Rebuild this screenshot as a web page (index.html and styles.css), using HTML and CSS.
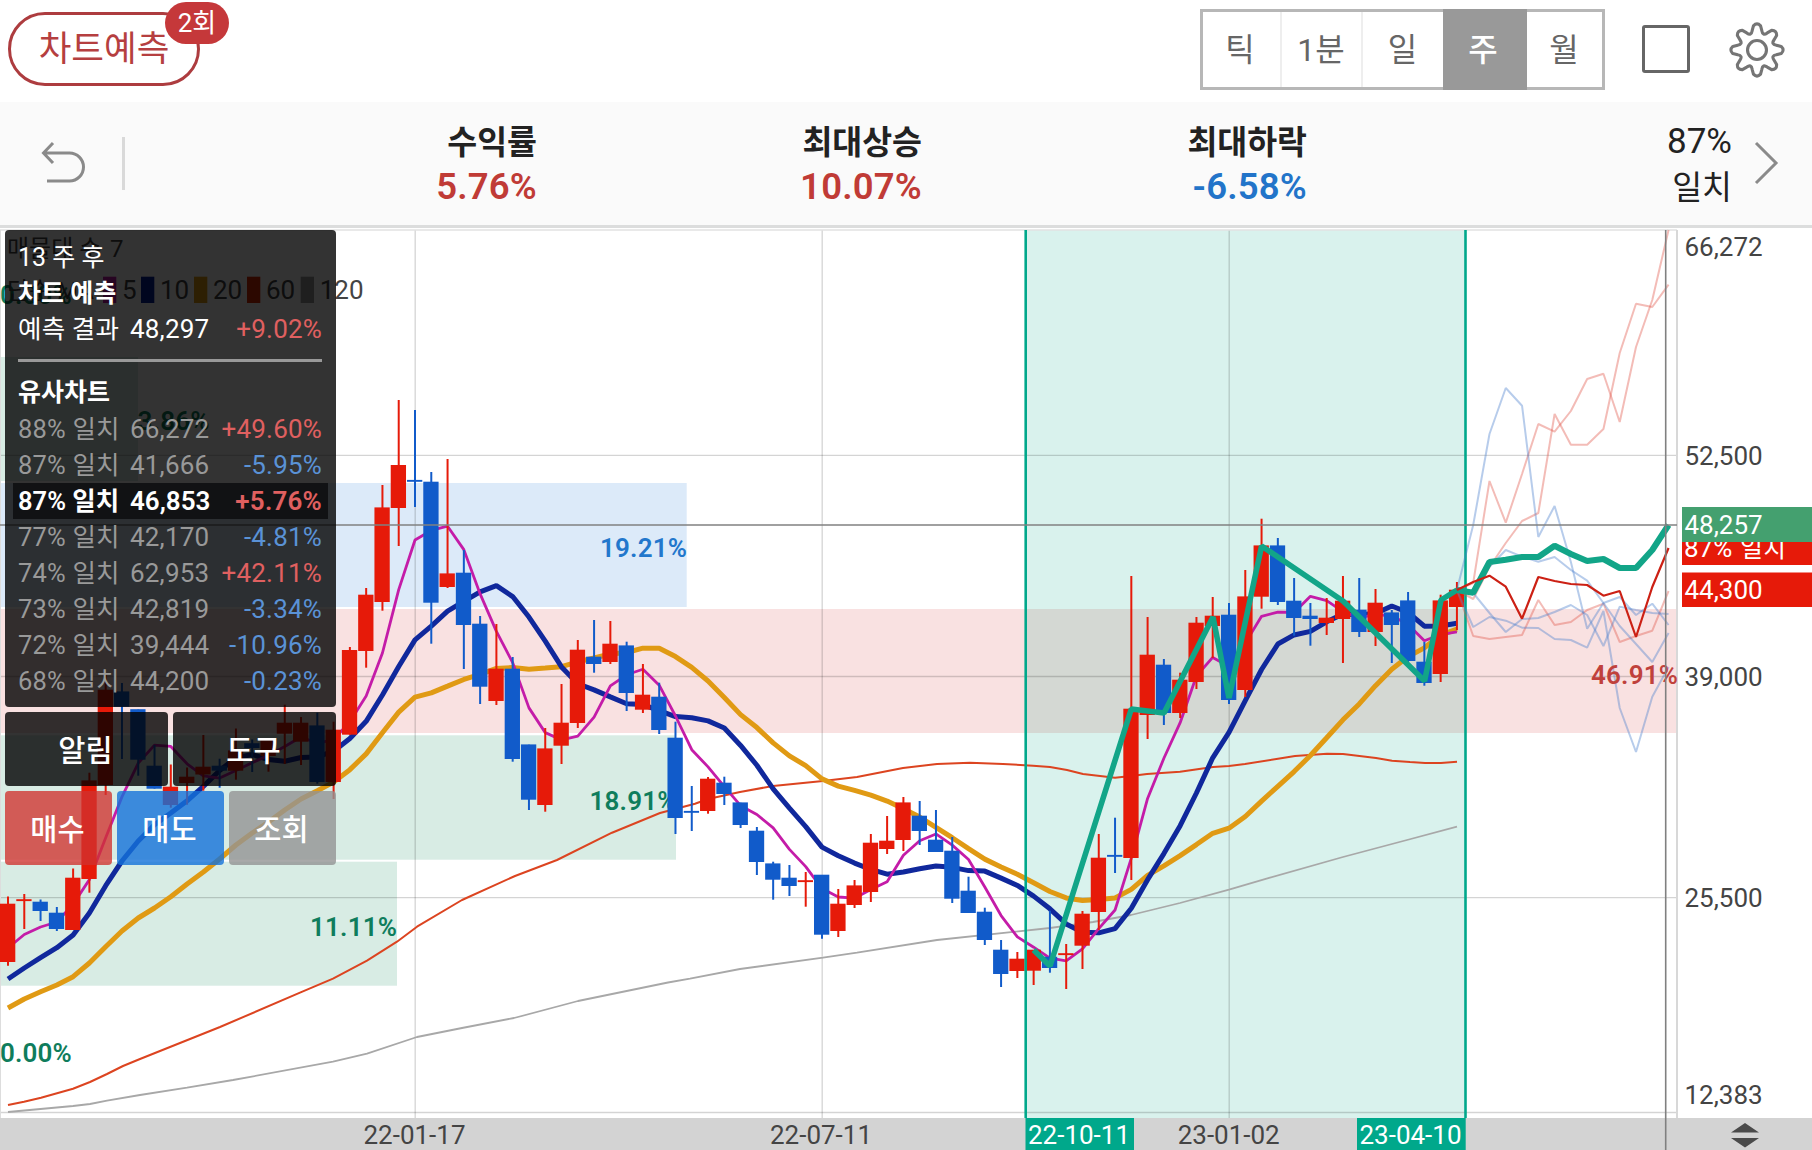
FILE: index.html
```html
<!DOCTYPE html>
<html lang="ko">
<head>
  <meta charset="UTF-8">
  <meta name="viewport" content="width=device-width, initial-scale=1.0">
  <title>차트예측</title>
  <link rel="stylesheet" href="styles.css">
</head>
<body>

<!-- 상단 메뉴 -->
<header class="topbar">
  <button class="predict-btn">차트예측<span class="badge">2회</span></button>
  <div class="tools">
    <div class="period">
      <button>틱</button>
      <button>1분</button>
      <button>일</button>
      <button class="active">주</button>
      <button>월</button>
    </div>
    <div class="square"></div>
    <svg class="gear" width="58" height="58" viewBox="-30 -30 60 60">
      <path d="M-5-20L-3.7-25Q0-29 3.7-25L5-20Q5.9-14.3 10.6-17.7L15.1-20.3Q20.5-20.5 20.3-15.1L17.7-10.6Q14.3-5.9 20-5L25-3.7Q29 0 25 3.7L20 5Q14.3 5.9 17.7 10.6L20.3 15.1Q20.5 20.5 15.1 20.3L10.6 17.7Q5.9 14.3 5 20L3.7 25Q0 29-3.7 25L-5 20Q-5.9 14.3-10.6 17.7L-15.1 20.3Q-20.5 20.5-20.3 15.1L-17.7 10.6Q-14.3 5.9-20 5L-25 3.7Q-29 0-25-3.7L-20-5Q-14.3-5.9-17.7-10.6L-20.3-15.1Q-20.5-20.5-15.1-20.3L-10.6-17.7Q-5.9-14.3-5-20Z"/>
      <circle r="9.8"/>
    </svg>
  </div>
</header>

<!-- 요약 -->
<section class="summary">
  <svg class="undo" width="46" height="46" viewBox="0 0 46 46">
    <path d="M13 4L3.5 14L13 24M4 14H29.5A14 14 0 0 1 29.5 42H7"/>
  </svg>
  <div class="divider"></div>
  <div class="stat"><b>수익률</b><strong class="up">5.76%</strong></div>
  <div class="stat"><b>최대상승</b><strong class="up">10.07%</strong></div>
  <div class="stat"><b>최대하락</b><strong class="down">-6.58%</strong></div>
  <div class="match"><span>87%</span><span class="label">일치</span></div>
  <svg class="next" width="26" height="46" viewBox="0 0 26 46">
    <path d="M2 3L22 23L2 43"/>
  </svg>
</section>

<!-- 차트 -->
<main class="chart-area">
  <svg id="chart" width="1812" height="922" viewBox="0 228 1812 922"></svg>

  <div class="overlay">
    <div class="panel">
      <p>13 주 후</p>
      <p class="bold">차트 예측</p>
      <div class="row result"><span>예측 결과</span><span>48,297</span><span class="plus">+9.02%</span></div>
      <hr>
      <p class="bold">유사차트</p>
      <div class="row"><span>88% 일치</span><span>66,272</span><span class="plus">+49.60%</span></div>
      <div class="row"><span>87% 일치</span><span>41,666</span><span class="minus">-5.95%</span></div>
      <div class="row selected"><span>87% 일치</span><span>46,853</span><span class="plus">+5.76%</span></div>
      <div class="row"><span>77% 일치</span><span>42,170</span><span class="minus">-4.81%</span></div>
      <div class="row"><span>74% 일치</span><span>62,953</span><span class="plus">+42.11%</span></div>
      <div class="row"><span>73% 일치</span><span>42,819</span><span class="minus">-3.34%</span></div>
      <div class="row"><span>72% 일치</span><span>39,444</span><span class="minus">-10.96%</span></div>
      <div class="row"><span>68% 일치</span><span>44,200</span><span class="minus">-0.23%</span></div>
    </div>
    <div class="actions">
      <button class="dark">알림</button>
      <button class="dark">도구</button>
    </div>
    <div class="actions">
      <button class="buy">매수</button>
      <button class="sell">매도</button>
      <button class="view">조회</button>
    </div>
  </div>
</main>

<script src="chart.js"></script>
</body>
</html>
```
FILE: styles.css
```css
/* 기본 */
* {
  margin: 0;
  padding: 0;
  box-sizing: border-box;
}

body {
  width: 1812px;
  height: 1150px;
  overflow: hidden;
  background: #fff;
  font-family: Roboto, "Noto Sans CJK KR", sans-serif;
  color: #222;
}

button {
  font-family: inherit;
  border: none;
  background: none;
}

/* 상단 메뉴 */
.topbar {
  display: flex;
  justify-content: space-between;
  height: 102px;
  padding: 9px 26px 0 8px;
}

.predict-btn {
  position: relative;
  width: 192px;
  height: 74px;
  margin-top: 3px;
  border: 3px solid #ad3c3f;
  border-radius: 37px;
  color: #b53f40;
  font-size: 35.5px;
  line-height: 66px;
  padding-bottom: 0;
}

.badge {
  position: absolute;
  top: -13px;
  right: -32px;
  width: 64px;
  height: 42px;
  border-radius: 21px;
  background: #c5383a;
  color: #fff;
  font-size: 26px;
  line-height: 43px;
}

.tools {
  display: flex;
  align-items: flex-start;
}

.period {
  display: flex;
  width: 405px;
  height: 81px;
  border: 3px solid #b7b7b7;
}

.period button {
  width: 81px;
  border-right: 2px solid #eee;
  color: #666;
  font-size: 32px;
  padding-right: 1px;
  padding-bottom: 5px;
}

.period button:first-child {
  width: 79px;
  padding-right: 3px;
}

.period button:nth-child(3) {
  width: 80px;
  border-right: none;
}

.period button:last-child {
  width: 75px;
  border-right: none;
}

.period .active {
  width: 84px;
  height: 81px;
  margin-top: -3px;
  padding-right: 4px;
  border: none;
  background: #999;
  color: #fff;
  font-weight: 500;
}

.square {
  width: 48px;
  height: 48px;
  margin: 16px 38px 0 37px;
  border: 3px solid #666;
  border-radius: 3px;
}

.gear {
  margin-top: 11.5px;
  fill: none;
  stroke: #757575;
  stroke-width: 3.2;
  stroke-linejoin: round;
}

/* 요약 */
.summary {
  display: flex;
  align-items: flex-start;
  height: 126px;
  background: #fafafa;
  border-bottom: 3px solid #dcdddd;
  padding-left: 40px;
}

.undo,
.next {
  fill: none;
  stroke: #8a8a8a;
  stroke-width: 3;
  margin-top: 37px;
}

.next {
  margin-top: 38px;
}

.divider {
  width: 3px;
  height: 53px;
  margin: 35px 28px 0 36px;
  background: #d9d9d9;
}

.stat {
  display: flex;
  flex-direction: column;
  align-items: flex-end;
  width: 385px;
  padding-top: 19px;
}

.stat b {
  font-size: 32.5px;
  line-height: 44px;
}

.stat strong {
  font-size: 36.5px;
  line-height: 44px;
  font-weight: 600;
  letter-spacing: 0.2px;
}

.divider + .stat {
  width: 384px;
}

.up {
  color: #c03b36;
}

.down {
  color: #2274c9;
}

.match {
  display: flex;
  flex-direction: column;
  align-items: flex-end;
  width: 425px;
  padding-top: 16px;
  margin-right: 22px;
  font-size: 35px;
  line-height: 47px;
}

.match .label {
  font-size: 32.5px;
}

/* 차트 */
.chart-area {
  position: relative;
  height: 922px;
}

#chart {
  display: block;
}

#chart text {
  font-size: 26px;
  fill: #444;
}

#chart .pct {
  font-size: 26px;
  font-weight: 600;
  letter-spacing: 0.15px;
}

#chart .small {
  font-size: 24px;
}

#chart .tag {
  fill: #fff;
}

.overlay {
  position: absolute;
  left: 5px;
  top: 2px;
  width: 331px;
  display: flex;
  flex-direction: column;
  gap: 5px;
}

.panel {
  height: 477px;
  padding: 10px 8px 0;
  border-radius: 4px;
  background: rgba(0, 0, 0, 0.8);
  color: #fff;
  font-size: 26px;
}

.panel p,
.row {
  height: 36px;
  line-height: 36px;
  padding: 0 6px 0 5px;
  white-space: nowrap;
}

.panel p {
  font-size: 25px;
}

.panel .bold {
  font-weight: 700;
}

.panel hr {
  height: 3px;
  border: none;
  background: #999;
  margin: 12px 6px 13px 5px;
}

.row {
  display: grid;
  grid-template-columns: 112px 81px 1fr;
  color: #999;
  letter-spacing: 0.2px;
}

.row span:last-child {
  text-align: right;
}

.row span:first-child {
  font-size: 25.5px;
}

.row.result {
  height: 35px;
  line-height: 35px;
  color: #fff;
}

.row.selected {
  background: rgba(0, 0, 0, 0.6);
  color: #fff;
  font-weight: 600;
  letter-spacing: 0;
}

.plus {
  color: #e06060;
}

.panel .selected .plus {
  letter-spacing: 0.2px;
}

.minus {
  color: #5a92d6;
}

.actions {
  display: flex;
  gap: 5px;
}

.actions button {
  flex: 1;
  height: 74px;
  padding: 0 2px 3px 0;
  border-radius: 4px;
  color: #fff;
  font-size: 29.5px;
  font-weight: 500;
}

.dark {
  background: rgba(0, 0, 0, 0.8);
}

.buy {
  background: rgba(207, 50, 46, 0.78);
}

.sell {
  background: rgba(20, 114, 218, 0.8);
}

.view {
  background: rgba(148, 148, 148, 0.8);
}
```
FILE: chart.js
```js
const chart = document.getElementById('chart');
const RED = '#e61a09';
const BLUE = '#115bca';
const GREEN = '#00a88b';

const STEP = 16.28; // 봉 간격
const xOf = i => 8 + i * STEP;

// [색, 몸통 위, 몸통 아래, 고가, 저가]
const candles = [
  ['r', 904, 962, 896.5, 965.7], ['r', 899.5, 900.5, 894, 929], ['b', 902, 911, 899.5, 921], ['b', 913, 929, 907, 931],
  ['r', 878, 930, 868.5, 930], ['r', 780.7, 879, 772.7, 892.7], ['r', 690, 785, 674, 795], ['b', 691.7, 706.7, 683, 759],
  ['b', 709.5, 759.7, 709.5, 775.7], ['b', 766, 788.7, 745, 788.7], ['r', 787, 805, 764.5, 807.7], ['r', 777, 783, 767.5, 804.7],
  ['r', 767, 774.5, 735, 790.7], ['b', 766, 770.7, 758.7, 787.7], ['r', 750.7, 770.7, 728.5, 779.7], ['b', 743.5, 748, 739.5, 772],
  ['r', 740.5, 756, 740.5, 771.7], ['r', 723, 733.7, 704.7, 764], ['r', 723, 741.7, 717, 765], ['b', 725.7, 782, 712.7, 783.7],
  ['r', 730, 782, 721.7, 799], ['r', 650.3, 734.7, 647, 734.7], ['r', 595, 651, 588, 667.7], ['r', 507.7, 602, 485, 610.7],
  ['r', 465.3, 508, 400, 546], ['b', 480.2, 481.5, 410, 507], ['b', 482, 602.7, 472, 643.7], ['r', 573.7, 587, 459, 588],
  ['b', 573, 625, 550, 669], ['b', 624, 686.7, 616, 704], ['r', 669, 701, 624, 705], ['b', 669, 759, 657, 761.7],
  ['b', 744.7, 799.7, 744.7, 810], ['r', 748.7, 805, 728, 811.7], ['r', 723, 745.7, 684, 764], ['r', 650, 723, 640, 728],
  ['b', 657, 664, 620, 672.7], ['r', 644, 662, 621, 664], ['b', 645.7, 693, 641.7, 711], ['r', 695, 709.7, 664, 713],
  ['b', 697, 730, 682.7, 734], ['b', 738, 818, 721.7, 834], ['b', 811.2, 812.5, 786, 831], ['r', 779, 811, 777, 813.7],
  ['b', 783, 794, 776.7, 805], ['b', 802.7, 825, 802.7, 828], ['b', 831, 862, 827, 875], ['b', 863.7, 879.7, 861.7, 899.7],
  ['b', 878, 886, 865, 896], ['r', 880.5, 881.5, 872, 906.7], ['b', 875, 934.7, 875, 938.7], ['r', 904, 931, 889, 937],
  ['r', 885.7, 905, 880, 908], ['r', 843, 892, 834, 902], ['r', 841, 849, 816, 854], ['r', 802.7, 840, 797, 851],
  ['b', 816, 831, 801, 845], ['b', 840, 852, 810, 852], ['b', 851, 898.7, 837, 903], ['b', 891, 913, 876.7, 913],
  ['b', 912, 940, 907.7, 945], ['b', 950, 974, 940, 987], ['r', 959, 971, 952, 978], ['r', 950, 970.7, 950, 985],
  ['b', 957, 968, 910.7, 972.7], ['r', 953.5, 954.5, 944, 989], ['r', 914, 945.7, 911, 969], ['r', 858, 912, 834, 930],
  ['b', 855.2, 856.4, 817.7, 873], ['r', 709, 858, 576, 880], ['r', 655, 715, 617, 739], ['b', 665, 713, 659, 725],
  ['r', 680, 713, 672.7, 718], ['r', 623, 682, 617, 689], ['r', 616, 626, 597, 658], ['b', 615, 700, 603, 704],
  ['r', 596.7, 690, 570, 697], ['r', 545.7, 596.7, 518.7, 608.7], ['b', 545.7, 602, 538, 605], ['b', 601, 618, 578, 635.7],
  ['b', 616, 619, 603, 645.7], ['r', 618, 623, 598, 635], ['r', 601, 619, 576, 663], ['b', 610, 632, 578, 637],
  ['r', 603, 632, 589, 646], ['b', 612.7, 625, 610, 663], ['b', 600.7, 661, 592, 662], ['b', 662, 683, 642, 685.7],
  ['r', 600.7, 674, 594.7, 682], ['r', 590, 607, 582, 630]
];

// 이동평균 앞부분은 이전 데이터로 계산된 값
const maHead = {
  5: [948, 934.5, 927, 922],
  10: [979, 968, 957.7, 947.7, 935, 913, 885.7, 861, 841],
  20: [1008, 999, 991.7, 985, 976.7, 963, 946.7, 931, 918, 908, 896.7, 884, 872, 859, 845, 833, 822, 810, 799]
};

const ma60 = [8,1105, 24,1101.7, 41,1097.7, 73,1088.7, 90,1082, 107,1074, 123,1066, 140,1059, 220,1027, 300,992.7,
  333,978.7, 367,960.7, 397,941.7, 417,926.7, 462,900, 515,876, 557,860, 612,832.7, 660,813, 695,803.7, 708,799, 740,792,
  773,786, 823,781, 857,777, 903,768, 937,764, 970,762.7, 1003,764, 1033,765.7, 1050,767, 1067,770, 1083,774, 1115,777.7,
  1131,776, 1147,774, 1180,771.7, 1213,767, 1229,766, 1245,764, 1278,758.7, 1295,756, 1327,753.7, 1343,754, 1376,758,
  1392,760.7, 1410,762, 1425,763, 1441,763, 1457,761.7];

const ma120 = [8,1112, 73,1106, 90,1104, 107,1100.7, 140,1095, 187,1087.7, 233,1080, 333,1061.7, 367,1053.7, 417,1037,
  462,1028, 514,1018, 578,1001, 668,982.5, 690,978.7, 740,969, 823,957.7, 857,952.7, 937,940, 1050,928, 1067,925.7,
  1093,922, 1131,915, 1180,903, 1229,889.7, 1270,877.7, 1343,857, 1407,840, 1457,826.7];

const zigzag = [1033.6,950, 1050,966, 1131.3,709, 1164,713, 1213,617, 1229,698, 1261.6,546, 1343,601, 1424.6,681, 1441,600, 1457,590];

// 예측 구간 (마지막 봉 이후 13주)
const similar = [
  ['r', [590, 583, 481, 522.7, 474, 424, 431.7, 411, 379, 373.7, 422, 347, 300, 230]],
  ['r', [590, 599, 567, 543, 521, 513, 414, 444.7, 444.7, 429, 353, 303.7, 307, 284.7]],
  ['r', [590, 636, 639, 637, 635, 600, 625, 622, 610, 603.7, 642, 636, 630.7, 591]],
  ['b', [590, 525, 434, 388, 405.7, 537, 506, 562, 628.7, 603, 597, 615, 603.7, 625]],
  ['b', [590, 592, 566.7, 550, 556.7, 561.7, 557, 570, 580.7, 603, 626, 644, 662, 633]],
  ['b', [590, 627, 617, 620.7, 627.7, 628, 639, 640, 647.7, 611, 708, 752, 696.7, 667]],
  ['b', [590, 593, 613, 632, 619, 618, 612, 605, 615, 646, 606.7, 610, 613, 614]]
];
const selected = [590, 582, 575.7, 586.7, 618.7, 577, 581, 584, 585, 595.7, 591, 637, 587, 548];
const forecast = [590, 592.7, 562, 559.7, 557, 557, 545.7, 554, 561, 559, 568, 568, 550, 525];

let out = '';

function rect(x, y, w, h, fill) {
  out += `<rect x="${x}" y="${y}" width="${w}" height="${h}" fill="${fill}"/>`;
}

function line(x1, y1, x2, y2, color, w) {
  out += `<path d="M${x1} ${y1}L${x2} ${y2}" stroke="${color}" stroke-width="${w}"/>`;
}

function poly(points, color, w, opacity = 1) {
  out += `<polyline points="${points.join(' ')}" fill="none" stroke="${color}" stroke-width="${w}" stroke-linejoin="bevel" opacity="${opacity}"/>`;
}

function text(x, y, str, cls = '', anchor = 'start', fill = '') {
  out += `<text x="${x}" y="${y}" class="${cls}" text-anchor="${anchor}"${fill ? ` style="fill:${fill}"` : ''}>${str}</text>`;
}

function average(n) {
  const closes = candles.map(c => c[0] === 'r' ? c[1] : c[2]);
  return candles.flatMap((c, i) => {
    const y = i < n - 1 ? maHead[n][i] : closes.slice(i - n + 1, i + 1).reduce((a, b) => a + b) / n;
    return [xOf(i), y];
  });
}

const future = ys => ys.flatMap((y, i) => [xOf(89 + i), y]);

// 매물대
rect(0, 357, 138, 124, '#d8ece4');
rect(0, 483, 686.7, 124, '#dceaf9');
rect(0, 609, 1677, 124, '#f9e1e1');
rect(0, 735.3, 676, 124.4, '#d8ece4');
rect(0, 861.7, 397, 124, '#d8ece4');

// 선택 구간
rect(1025.5, 230, 440.5, 888, 'rgba(0,166,135,0.15)');

// 격자
[455.3, 676.5, 897.7, 1112.5].forEach(y => line(0, y, 1677, y, 'rgba(0,0,0,0.17)', 1.3));
[415.2, 822.2, 1229.2].forEach(x => line(x, 230, x, 1118, 'rgba(0,0,0,0.15)', 1.5));
line(0, 230, 1677, 230, '#e2e2e2', 1.5);
line(0.5, 230, 0.5, 1118, '#ddd', 1);
line(1677, 230, 1677, 1118, '#d8d8d8', 2);

// 매물대 비율, 범례
text(0, 304, '0.00%', 'pct', 'start', '#0f7d5c');
text(209.5, 430, '3.86%', 'pct', 'end', '#0f7d5c');
text(687, 556.7, '19.21%', 'pct', 'end', '#2277cc');
text(676.5, 809.5, '18.91%', 'pct', 'end', '#0f7d5c');
text(397, 936, '11.11%', 'pct', 'end', '#0f7d5c');
text(0, 1061.5, '0.00%', 'pct', 'start', '#0f7d5c');
text(7, 257, '매물대 수 <tspan x="110">7</tspan>', 'small');
text(7, 299, '단순 MA', 'small');
[[103, '#c41ca8', 5], [141, '#00209c', 10], [194, '#e09a10', 20], [247, '#d92800', 60], [300.7, '#999', 120]].forEach(m => {
  rect(m[0], 276.7, 13.3, 26.3, m[1]);
  text(m[0] + 19, 299, m[2]);
});

// 이동평균선
poly(ma120, '#a8a8a8', 1.8);
poly(ma60, '#dc4420', 2);
poly(average(20), '#e09a14', 5);
poly(average(10), '#10289c', 5);
poly(average(5), '#c41ca8', 2.8);

// 봉
candles.forEach((c, i) => {
  const color = c[0] === 'r' ? RED : BLUE;
  const x = xOf(i);
  line(x, c[3], x, c[4], color, 2);
  rect(x - 8, c[1] - 0.3, 15.3, Math.max(c[2] - c[1], 1.6) + 0.3, color);
});

line(1025.7, 230, 1025.7, 1118, GREEN, 2.6);
line(1465.5, 230, 1465.5, 1118, GREEN, 2.6);

similar.forEach(s => poly(future(s[1]), s[0] === 'r' ? '#e0574a' : '#4a80cc', 2, 0.4));
poly(zigzag, '#12a588', 5.6);
poly(future(forecast), '#12a588', 6.2);
poly(future(selected), '#cc2014', 2.2);
text(1678, 683.6, '46.91%', 'pct', 'end', '#c0413c');

// 가격 축
[[256, '66,272'], [464.7, '52,500'], [685.5, '39,000'], [906.5, '25,500'], [1104, '12,383']].forEach(p => text(1684.5, p[0], p[1]));
rect(1682, 530, 130, 35, RED);
text(1684, 557, '87% <tspan x="1740" font-size="25">일치</tspan>', 'tag');
rect(1682, 507, 130, 35, '#44a06f');
text(1684.5, 533.7, '48,257', 'tag');
rect(1682, 572.5, 130, 34.5, RED);
text(1684.5, 599, '44,300', 'tag');

// 날짜 축
rect(0, 1118, 1812, 32, '#d3d3d3');
rect(1025.5, 1118, 108.5, 32, GREEN);
rect(1357, 1118, 108.7, 32, GREEN);
text(414.5, 1143.7, '22-01-17', '', 'middle');
text(821, 1143.7, '22-07-11', '', 'middle');
text(1079, 1143.7, '22-10-11', 'tag', 'middle');
text(1228.7, 1143.7, '23-01-02', '', 'middle');
text(1410.5, 1143.7, '23-04-10', 'tag', 'middle');
out += '<path d="M1731 1132.5L1745 1123L1759 1132.5ZM1731 1138L1745 1147.5L1759 1138Z" fill="#4a4a4a"/>';

// 십자선
line(0, 525, 1677, 525, '#808080', 1.6);
line(1665.7, 230, 1665.7, 1150, '#808080', 1.6);

chart.innerHTML = out;
```
